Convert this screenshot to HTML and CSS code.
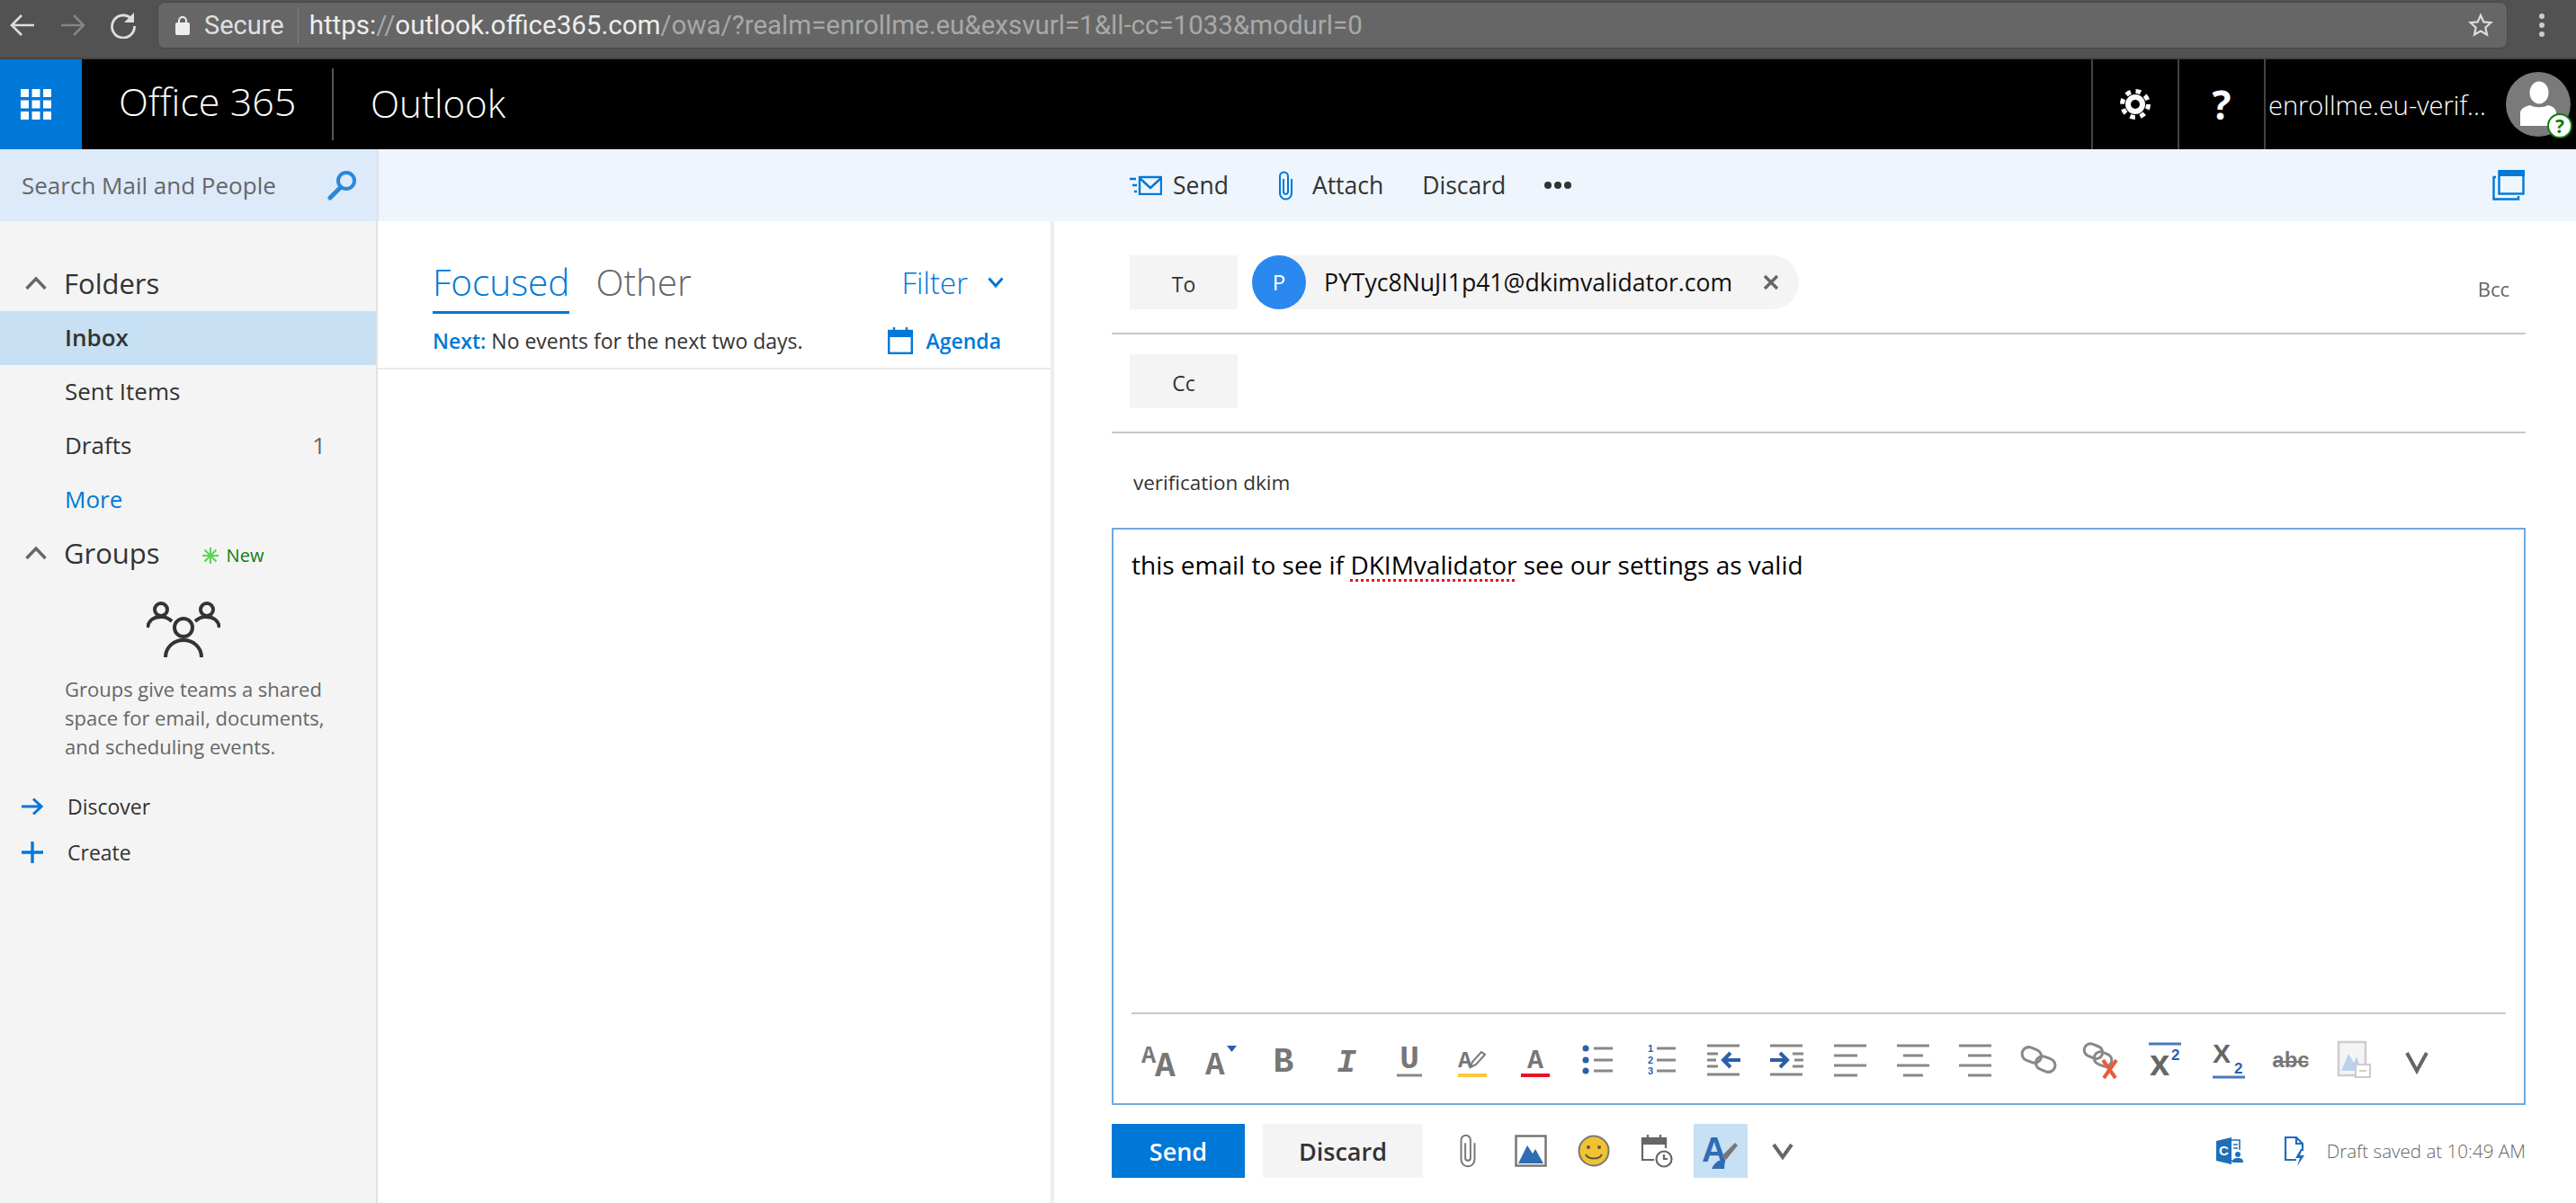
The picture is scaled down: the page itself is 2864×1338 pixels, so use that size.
FILE: index.html
```html
<!DOCTYPE html>
<html lang="en">

<head>
    <meta charset="UTF-8">
    <title>Outlook</title>
    <link rel="stylesheet" href="styles.css">
</head>

<body>
    <!-- browser chrome -->
    <div class="browser-bar">
        <div class="browser-nav">
            <button class="nav-btn">
                <svg width="28" height="26" viewBox="0 0 28 26" fill="none" stroke="#ddd" stroke-width="2.6"><path d="M27 13H3M13 2L2 13l11 11"/></svg>
            </button>
            <button class="nav-btn">
                <svg width="28" height="26" viewBox="0 0 28 26" fill="none" stroke="#858585" stroke-width="2.6"><path d="M1 13h24M15 2l11 11-11 11"/></svg>
            </button>
            <button class="nav-btn">
                <svg width="30" height="30" viewBox="0 0 30 30" fill="none" stroke="#ddd" stroke-width="2.8"><path d="M25 9A12.500 12.500 0 1 0 27.500 16"/><path d="M27 1v11H16" fill="#ddd" stroke="none"/></svg>
            </button>
        </div>
        <div class="omnibox">
            <svg class="lock" width="16" height="22" viewBox="0 0 16 22"><path d="M4 9V6a4 4 0 0 1 8 0v3" fill="none" stroke="#eee" stroke-width="2"/><rect y="8" width="16" height="14" rx="2" fill="#eee"/></svg>
            <span class="secure">Secure</span>
            <span class="url"><b>https:</b>//<b>outlook.office365.com</b>/owa/?realm=enrollme.eu&amp;exsvurl=1&amp;ll-cc=1033&amp;modurl=0</span>
            <svg class="star" width="28" height="28" viewBox="0 0 28 28"><path d="M14 3l3.3 7.4 8 .8-6 5.4 1.7 7.9-7-4-7 4 1.7-7.9-6-5.4 8-.8z" fill="none" stroke="#ddd" stroke-width="2.2"/></svg>
        </div>
        <div class="browser-menu">
            <svg width="8" height="28" viewBox="0 0 8 28" fill="#ccc"><circle cx="4" cy="4" r="3"/><circle cx="4" cy="14" r="3"/><circle cx="4" cy="24" r="3"/></svg>
        </div>
    </div>

    <!-- office 365 header -->
    <header class="suite-bar">
        <div class="app-tile">
            <svg width="34" height="34" viewBox="0 0 34 34" fill="#fff">
                <rect width="9" height="9"/><rect x="12.500" width="9" height="9"/><rect x="25" width="9" height="9"/>
                <rect y="12.500" width="9" height="9"/><rect x="12.500" y="12.500" width="9" height="9"/><rect x="25" y="12.500" width="9" height="9"/>
                <rect y="25" width="9" height="9"/><rect x="12.500" y="25" width="9" height="9"/><rect x="25" y="25" width="9" height="9"/>
            </svg>
        </div>
        <div class="suite-name">Office 365</div>
        <div class="suite-app">Outlook</div>
        <div class="suite-actions">
            <div class="suite-btn">
                <svg width="36" height="36" viewBox="0 0 36 36" fill="none" stroke="#fff"><circle cx="18" cy="18" r="8" stroke-width="6"/><circle cx="18" cy="18" r="14.5" stroke-width="5" stroke-dasharray="5.7 5.7"/></svg>
            </div>
            <div class="suite-btn suite-help">?</div>
            <div class="suite-user">
                <span class="user-name">enrollme.eu-verif...</span>
                <div class="user-photo">
                    <svg width="72" height="72" viewBox="0 0 72 72"><circle cx="36" cy="36" r="36" fill="#7a7a7a"/><ellipse cx="37" cy="23" rx="10.500" ry="12.500" fill="#fff"/><path d="M16 60V46c0-6 7-8 11-9 5 3 15 3 20 0 4 1 9 3 9 9v14z" fill="#fff"/></svg>
                    <span class="user-badge">?</span>
                </div>
            </div>
        </div>
    </header>

    <div class="command-row">
        <div class="search-box">
            <span>Search Mail and People</span>
            <svg width="34" height="34" viewBox="0 0 34 34" fill="none" stroke="#2b88d8"><circle cx="22" cy="12" r="9" stroke-width="4"/><path d="M15 20L4 31" stroke-width="5" stroke-linecap="round"/></svg>
        </div>
        <div class="commands">
            <button class="cmd">
                <svg width="36" height="22" viewBox="0 0 36 22" fill="none" stroke="#0078d7" stroke-width="2.4"><rect x="11" y="2" width="24" height="19"/><path d="M11 3l12 11L35 3"/><path d="M0 4h7M3 11h5M5 18h3"/></svg>
                Send
            </button>
            <button class="cmd cmd-attach">
                <svg width="17" height="33" viewBox="0 0 17 33" fill="none" stroke="#0078d7" stroke-width="2"><path d="M6 9v15a2.600 2.600 0 0 0 5 0V6a4.500 4.500 0 0 0-9 0v19a6.500 6.500 0 0 0 13 0V9"/></svg>
                Attach
            </button>
            <button class="cmd cmd-discard">Discard</button>
            <button class="cmd cmd-more">
                <svg width="32" height="10" viewBox="0 0 32 10" fill="#333"><circle cx="5" cy="5" r="4"/><circle cx="16" cy="5" r="4"/><circle cx="27" cy="5" r="4"/></svg>
            </button>
            <svg class="popout" width="36" height="34" viewBox="0 0 36 34" fill="none" stroke="#0078d7" stroke-width="2.400"><path d="M4 8H1.500v24.500H29V29"/><rect x="7.500" y="1.500" width="27" height="25" fill="#eef5fd"/><rect x="7" y="0" width="29" height="7" fill="#0078d7" stroke="none"/></svg>
        </div>
    </div>

    <div class="panes">
        <nav class="sidebar">
            <div class="folder-head">
                <svg class="collapse" width="24" height="16" viewBox="0 0 24 16" fill="none" stroke="#666" stroke-width="3.400"><path d="M1.500 14L12 3l10.500 11"/></svg>
                <span>Folders</span>
            </div>
            <div class="folder-row active">Inbox</div>
            <div class="folder-row">Sent Items</div>
            <div class="folder-row">Drafts<span class="count">1</span></div>
            <div class="folder-row more">More</div>
            <div class="folder-head groups-head">
                <svg class="collapse" width="24" height="16" viewBox="0 0 24 16" fill="none" stroke="#666" stroke-width="3.400"><path d="M1.500 14L12 3l10.500 11"/></svg>
                <span>Groups</span>
                <svg class="new-mark" width="20" height="20" viewBox="0 0 20 20" stroke="#5ad35a" stroke-width="2"><path d="M10 1v18M1 10h18M3.500 3.500l13 13M16.500 3.500l-13 13"/></svg>
                <span class="new-label">New</span>
            </div>
            <svg class="groups-icon" width="82" height="64" viewBox="0 0 82 64" fill="none" stroke="#333" stroke-width="4">
                <circle cx="16" cy="11" r="7"/>
                <circle cx="67" cy="11" r="7"/>
                <circle cx="41" cy="31" r="10"/>
                <path d="M1 31c1-8 7-12 15-12 5 0 9 2 12 5M81 31c-1-8-7-12-15-12-5 0-9 2-12 5"/>
                <path d="M21 64c0-11 9-19 20-19s20 8 20 19"/>
            </svg>
            <p class="groups-text">Groups give teams a shared space for email, documents, and scheduling events.</p>
            <div class="side-link">
                <svg width="24" height="20" viewBox="0 0 24 20" fill="none" stroke="#0078d7" stroke-width="3"><path d="M0 10h22M13 1.500l9 8.500-9 8.500"/></svg>
                Discover
            </div>
            <div class="side-link">
                <svg width="24" height="24" viewBox="0 0 24 24" fill="none" stroke="#0078d7" stroke-width="3.400"><path d="M12 0v24M0 12h24"/></svg>
                Create
            </div>
        </nav>

        <section class="mail-list">
            <div class="tabs">
                <span class="tab active">Focused</span>
                <span class="tab">Other</span>
                <span class="filter">Filter
                    <svg width="18" height="12" viewBox="0 0 18 12" fill="none" stroke="#0078d7" stroke-width="3"><path d="M1.500 1.500L9 10l7.500-8.500"/></svg>
                </span>
            </div>
            <div class="next-row">
                <span><b>Next:</b> No events for the next two days.</span>
                <span class="agenda">
                    <svg width="28" height="30" viewBox="0 0 28 30" fill="none" stroke="#0078d7" stroke-width="2.400"><rect x="1.200" y="4" width="25.600" height="24.800"/><rect x="1" y="4" width="26" height="7" fill="#0078d7" stroke="none"/><path d="M7 0v6M21 0v6"/></svg>
                    Agenda
                </span>
            </div>
        </section>

        <main class="compose">
            <div class="recipient-row">
                <button class="field-btn">To</button>
                <div class="chip">
                    <span class="chip-avatar">P</span>
                    <span class="chip-mail">PYTyc8NuJI1p41@dkimvalidator.com</span>
                    <svg class="chip-close" width="18" height="18" viewBox="0 0 18 18" fill="none" stroke="#666" stroke-width="3.400"><path d="M2 2l14 14M16 2L2 16"/></svg>
                </div>
                <span class="bcc">Bcc</span>
            </div>
            <div class="recipient-row cc-row">
                <button class="field-btn">Cc</button>
            </div>
            <div class="subject">verification dkim</div>

            <div class="editor">
                <div class="editor-text">this email to see if <span class="misspelled">DKIMvalidator</span> see our settings as valid</div>
                <div class="format-bar">
                    <span class="fmt"><svg class="ico" width="44" height="44" viewBox="0 0 44 44"><text class="glyph" x="2" y="25" font-size="27">A</text><text class="glyph" x="17" y="40" font-size="38">A</text></svg></span>
                    <span class="fmt fmt-tight"><svg class="ico" width="44" height="44" viewBox="0 0 44 44"><text class="glyph" x="4" y="38" font-size="36">A</text><path d="M28 6h11l-5.500 7z" fill="#2b5fa8"/></svg></span>
                    <span class="fmt"><svg class="ico" width="44" height="44" viewBox="0 0 44 44"><text class="glyph" x="22" y="35" text-anchor="middle" font-size="38">B</text></svg></span>
                    <span class="fmt"><svg class="ico" width="44" height="44" viewBox="0 0 44 44"><text class="glyph slant" x="22" y="35" text-anchor="middle" font-size="36">I</text></svg></span>
                    <span class="fmt"><svg class="ico" width="44" height="44" viewBox="0 0 44 44"><text class="glyph" x="22" y="31" text-anchor="middle" font-size="36">U</text><path d="M8 39h28" stroke="#888" stroke-width="3"/></svg></span>
                    <span class="fmt"><svg class="ico" width="44" height="44" viewBox="0 0 44 44"><text class="glyph" x="6" y="30" font-size="26">A</text><path d="M20 30l2-6 10-11 4 3-10 11z" fill="#fff" stroke="#777" stroke-width="2"/><path d="M6 39h32" stroke="#ffc83d" stroke-width="4"/></svg></span>
                    <span class="fmt"><svg class="ico" width="44" height="44" viewBox="0 0 44 44"><text class="glyph" x="22" y="31" text-anchor="middle" font-size="30">A</text><path d="M6 39h32" stroke="#e81123" stroke-width="4"/></svg></span>
                    <span class="fmt"><svg class="ico" width="44" height="44" viewBox="0 0 44 44"><g fill="#2b5fa8"><circle cx="8" cy="9" r="3.500"/><circle cx="8" cy="22" r="3.500"/><circle cx="8" cy="34" r="3.500"/></g><path d="M17 9h21M17 22h21M17 34h21" stroke="#888" stroke-width="3"/></svg></span>
                    <span class="fmt"><svg class="ico" width="44" height="44" viewBox="0 0 44 44"><text class="num" x="7" y="13" font-size="11">1</text><text class="num" x="7" y="26" font-size="11">2</text><text class="num" x="7" y="38" font-size="11">3</text><path d="M17 9h21M17 22h21M17 34h21" stroke="#888" stroke-width="3"/></svg></span>
                    <span class="fmt"><svg class="ico" width="44" height="44" viewBox="0 0 44 44"><path d="M3 6h36M3 38h36M3 15h12M3 22h10M3 29h12" stroke="#888" stroke-width="3" fill="none"/><path d="M40 22H22M29 14l-8 8 8 8" stroke="#2b5fa8" stroke-width="4" fill="none"/></svg></span>
                    <span class="fmt"><svg class="ico" width="44" height="44" viewBox="0 0 44 44"><path d="M3 6h36M3 38h36M28 15h12M30 22h10M28 29h12" stroke="#888" stroke-width="3" fill="none"/><path d="M3 22h18M14 14l8 8-8 8" stroke="#2b5fa8" stroke-width="4" fill="none"/></svg></span>
                    <span class="fmt"><svg class="ico" width="44" height="44" viewBox="0 0 44 44"><path d="M4 6h36M4 17h26M4 28h36M4 39h26" stroke="#888" stroke-width="3"/></svg></span>
                    <span class="fmt"><svg class="ico" width="44" height="44" viewBox="0 0 44 44"><path d="M4 6h36M11 17h22M4 28h36M11 39h22" stroke="#888" stroke-width="3"/></svg></span>
                    <span class="fmt"><svg class="ico" width="44" height="44" viewBox="0 0 44 44"><path d="M3 6h36M13 17h26M3 28h36M13 39h26" stroke="#888" stroke-width="3"/></svg></span>
                    <span class="fmt"><svg class="ico" width="44" height="44" viewBox="0 0 44 44" fill="none" stroke="#888" stroke-width="3"><rect x="3" y="9" width="22" height="15" rx="7.500" transform="rotate(22 14 16)"/><rect x="18" y="19" width="22" height="15" rx="7.500" transform="rotate(22 29 27)"/></svg></span>
                    <span class="fmt"><svg class="ico" width="44" height="44" viewBox="0 0 44 44" fill="none"><g stroke="#888" stroke-width="3"><rect x="2" y="5" width="21" height="14" rx="7" transform="rotate(22 12 12)"/><rect x="13" y="14" width="20" height="14" rx="7" transform="rotate(22 23 21)"/></g><path d="M23 22l14 20M38 22L24 42" stroke="#ea5a3c" stroke-width="4"/></svg></span>
                    <span class="fmt"><svg class="ico" width="44" height="44" viewBox="0 0 44 44"><path d="M4 4h36" stroke="#4a78bd" stroke-width="3"/><text class="sup-x" x="5" y="39" font-size="40">x</text><text class="num" x="29" y="22" font-size="17">2</text></svg></span>
                    <span class="fmt"><svg class="ico" width="44" height="44" viewBox="0 0 44 44"><text class="sup-x" x="5" y="25" font-size="30">X</text><text class="num" x="29" y="37" font-size="17">2</text><path d="M5 41h36" stroke="#4a78bd" stroke-width="3"/></svg></span>
                    <span class="fmt"><svg class="ico" width="44" height="44" viewBox="0 0 44 44"><text class="abc" x="22" y="30" text-anchor="middle" font-size="24">abc</text><path d="M3 24h38" stroke="#777" stroke-width="2"/></svg></span>
                    <span class="fmt"><svg class="ico" width="44" height="44" viewBox="0 0 44 44"><rect x="5" y="2" width="30" height="37" fill="#f4f4f4" stroke="#ccc" stroke-width="2.500"/><path d="M8 34l8-19 6 10 3-7 6 16z" fill="#bcd2ec"/><rect x="24" y="27" width="16" height="14" fill="#fff" stroke="#ccc" stroke-width="2"/><path d="M28 34h8" stroke="#ccc" stroke-width="2"/></svg></span>
                    <span class="fmt"><svg class="ico" width="44" height="44" viewBox="0 0 44 44" fill="none"><path d="M11 14l11 20 11-20" stroke="#666" stroke-width="4"/></svg></span>
                </div>
            </div>

            <footer class="compose-footer">
                <button class="btn-send">Send</button>
                <button class="btn-discard">Discard</button>
                <span class="foot-icon"><svg width="24" height="38" viewBox="0 0 17 33" fill="none" stroke="#777" stroke-width="1.700"><path d="M6 9v15a2.600 2.600 0 0 0 5 0V6a4.500 4.500 0 0 0-9 0v19a6.500 6.500 0 0 0 13 0V9"/></svg></span>
                <span class="foot-icon"><svg width="36" height="36" viewBox="0 0 36 36"><rect x="1.500" y="1.500" width="33" height="33" fill="#fff" stroke="#777" stroke-width="2.500"/><path d="M4 32l10-20 6 9 3-5 9 16z" fill="#2f6cb3"/></svg></span>
                <span class="foot-icon"><svg width="36" height="36" viewBox="0 0 36 36"><circle cx="18" cy="18" r="16.500" fill="#f2c230" stroke="#777" stroke-width="2"/><circle cx="12" cy="14" r="2" fill="#555"/><circle cx="24" cy="14" r="2" fill="#555"/><path d="M9 22c3 6 15 6 18 0" fill="none" stroke="#555" stroke-width="2"/></svg></span>
                <span class="foot-icon"><svg width="36" height="38" viewBox="0 0 36 38" fill="none" stroke="#666" stroke-width="2.200"><path d="M15 29H2V6h26v10"/><rect x="2" y="5" width="26" height="6" fill="#666"/><path d="M8 1v6M22 1v6"/><circle cx="26" cy="28" r="8.500" fill="#fff"/><path d="M26 23v5h4"/></svg></span>
                <span class="foot-tile"><svg class="ico" width="44" height="44" viewBox="0 0 44 44"><text class="tile-a" x="1" y="34" font-size="38">A</text><path d="M23 28l15-15 3 3-13 16z" fill="#777"/><path d="M12 42c3-7 9-11 15-10l-1 10z" fill="#2f6cb3"/></svg></span>
                <span class="foot-chevron"><svg width="26" height="20" viewBox="0 0 26 20" fill="none" stroke="#666" stroke-width="4"><path d="M3 3l10 14L23 3"/></svg></span>
                <div class="foot-right">
                    <svg class="foot-app" width="30" height="30" viewBox="0 0 30 30"><path d="M0 4l17-4v30L0 26z" fill="#1e6fba"/><path d="M17 3h9v11M17 26h3M19 8h5M19 12h5" fill="none" stroke="#1e6fba" stroke-width="1.600"/><text class="door" x="3" y="20" font-size="15">C</text><circle cx="24" cy="19" r="3" fill="#1e6fba"/><path d="M18 28c0-4 2-5 6-5s6 1 6 5z" fill="#1e6fba"/></svg>
                    <svg class="foot-doc" width="24" height="34" viewBox="0 0 24 34" fill="none" stroke="#1e6fba" stroke-width="2.200"><path d="M14 27H2V2h12l7 7v8"/><path d="M14 2v7h7"/><path d="M19 15l-6 10h5l-3 9 8-12h-5l3-7z" fill="#1e6fba" stroke="none"/></svg>
                    <span class="draft-note">Draft saved at 10:49 AM</span>
                </div>
            </footer>
        </main>
    </div>
</body>

</html>
```

FILE: styles.css
```css
:root {
    --blue: #0078d7;
    --text-dark: #333;
    --text-gray: #666;
    --pale: #f4f4f4;
    --ui-font: 'Open Sans', 'Noto Sans', sans-serif;
}

* {
    margin: 0;
    padding: 0;
    box-sizing: border-box;
}

html,
body {
    height: 100%;
    overflow: hidden;
}

body {
    font-family: var(--ui-font);
    background: #fff;
    color: var(--text-dark);
    display: flex;
    flex-direction: column;
}

button {
    font-family: inherit;
    border: none;
    background: none;
    color: inherit;
}

b {
    font-weight: inherit;
}

/* browser chrome */
.browser-bar {
    height: 66px;
    flex: none;
    background: #525252;
    border-bottom: 2px solid #444;
    display: flex;
    align-items: flex-start;
    padding-top: 2px;
}

.browser-nav {
    display: flex;
    gap: 6px;
}

.nav-btn {
    width: 50px;
    height: 52px;
    display: flex;
    align-items: center;
    justify-content: center;
}

.omnibox {
    width: 2621px;
    height: 52px;
    margin-left: 13px;
    background: #666;
    border: 1px solid #484848;
    border-radius: 8px;
    display: flex;
    align-items: center;
    padding-left: 19px;
    padding-right: 15px;
    font-family: 'Roboto', sans-serif;
    font-size: 29px;
    color: #a8a8a8;
}

.secure {
    margin-left: 16px;
    padding-right: 15px;
    border-right: 1px solid #808080;
    color: #e0e0e0;
    line-height: 40px;
}

.url {
    margin-left: 12px;
    font-size: 29.5px;
    white-space: nowrap;
}

.url b {
    color: #eee;
}

.star {
    margin-left: auto;
}

.browser-menu {
    width: 76px;
    height: 52px;
    display: flex;
    align-items: center;
    justify-content: center;
}

/* suite header */
.suite-bar {
    height: 100px;
    flex: none;
    background: #000;
    color: #fff;
    display: flex;
    align-items: center;
}

.app-tile {
    width: 91px;
    height: 100%;
    padding-right: 11px;
    background: var(--blue);
    display: flex;
    align-items: center;
    justify-content: center;
}

.suite-name {
    width: 280px;
    height: 80px;
    padding-left: 41px;
    border-right: 2px solid #555;
    font-size: 43px;
    font-weight: 300;
    line-height: 74px;
    white-space: nowrap;
}

.suite-app {
    margin-left: 41px;
    padding-bottom: 4px;
    font-size: 42px;
    font-weight: 300;
}

.suite-actions {
    margin-left: auto;
    height: 100%;
    display: flex;
}

.suite-btn {
    width: 96px;
    border-left: 2px solid #444;
    display: flex;
    align-items: center;
    justify-content: center;
}

.suite-help {
    font-size: 44px;
    font-weight: 700;
}

.suite-user {
    width: 347px;
    border-left: 2px solid #444;
    display: flex;
    align-items: center;
    padding-left: 3px;
}

.user-name {
    width: 264px;
    font-size: 29px;
    font-weight: 300;
    white-space: nowrap;
}

.user-photo {
    position: relative;
    width: 72px;
    height: 72px;
}

.user-photo svg {
    display: block;
}

.user-badge {
    position: absolute;
    right: -2px;
    bottom: -2px;
    width: 28px;
    height: 28px;
    border: 2px solid #107c10;
    border-radius: 50%;
    background: #fff;
    color: #107c10;
    font-size: 21px;
    font-weight: 700;
    line-height: 24px;
    text-align: center;
}

/* search and commands */
.command-row {
    height: 80px;
    flex: none;
    display: flex;
}

.search-box {
    width: 419px;
    background: #dceafa;
    display: flex;
    align-items: center;
    justify-content: space-between;
    padding: 0 22px 0 24px;
    font-size: 26px;
    color: var(--text-gray);
}

.commands {
    flex: 1;
    background: #eef5fd;
    border-left: 2px solid #e3e3e3;
    display: flex;
    align-items: center;
    padding-left: 835px;
    padding-right: 57px;
}

.cmd {
    display: flex;
    align-items: center;
    gap: 12px;
    font-size: 26.5px;
    white-space: nowrap;
}

.cmd-attach {
    margin-left: 55px;
    gap: 21px;
}

.cmd-discard {
    margin-left: 43px;
}

.cmd-more {
    margin-left: 42px;
}

.popout {
    margin-left: auto;
}

/* three panes */
.panes {
    flex: 1;
    display: flex;
    min-height: 0;
}

.sidebar {
    width: 420px;
    flex: none;
    background: var(--pale);
    border-right: 2px solid #e3e3e3;
    padding-top: 40px;
    font-size: 26px;
}

.folder-head {
    height: 60px;
    display: flex;
    align-items: center;
    padding: 0 0 3px 28px;
    font-size: 31px;
    color: var(--text-dark);
}

.folder-head span {
    margin-left: 19px;
}

.collapse {
    flex: none;
}

.folder-row {
    height: 60px;
    display: flex;
    align-items: center;
    justify-content: space-between;
    padding: 0 56px 3px 72px;
    color: var(--text-dark);
}

.folder-row.active {
    background: #c7e0f4;
    font-weight: 600;
}

.folder-row.more {
    color: var(--blue);
}

.count {
    color: var(--text-gray);
}

.new-mark {
    margin-left: 46px;
    margin-top: 6px;
}

.folder-head .new-label {
    margin: 6px 0 0 8px;
    font-size: 20px;
    color: #107c10;
}

.groups-icon {
    display: block;
    margin: 21px 0 0 163px;
}

.groups-text {
    margin: 19px 40px 0 72px;
    font-size: 22px;
    line-height: 32px;
    color: var(--text-gray);
}

.side-link {
    height: 51px;
    display: flex;
    align-items: center;
    gap: 27px;
    padding-left: 24px;
    font-size: 23px;
}

.groups-text + .side-link {
    margin-top: 25px;
}

/* message list */
.mail-list {
    width: 752px;
    flex: none;
    border-right: 4px solid #eee;
    padding-top: 38px;
}

.tabs {
    height: 65px;
    display: flex;
    padding: 0 52px 0 61px;
}

.tab {
    height: 65px;
    margin-right: 29px;
    font-size: 40.5px;
    font-weight: 300;
    line-height: 60px;
    color: var(--text-gray);
}

.tab.active {
    color: var(--blue);
    border-bottom: 3px solid var(--blue);
}

.filter {
    margin-left: auto;
    height: 60px;
    display: flex;
    align-items: center;
    gap: 22px;
    font-size: 33px;
    font-weight: 300;
    color: var(--blue);
}

.next-row {
    height: 62px;
    display: flex;
    align-items: center;
    justify-content: space-between;
    padding: 0 55px 0 61px;
    border-bottom: 2px solid #eaeaea;
    font-size: 23px;
}

.next-row b {
    color: var(--blue);
    font-weight: 600;
}

.agenda {
    display: flex;
    align-items: center;
    gap: 15px;
    color: var(--blue);
    font-weight: 600;
}

/* compose form */
.compose {
    flex: 1;
    min-width: 0;
    padding: 38px 56px 0 64px;
}

.recipient-row {
    display: flex;
    padding: 0 0 26px 20px;
    border-bottom: 2px solid #c8c8c8;
}

.cc-row {
    padding-top: 22px;
}

.field-btn {
    width: 120px;
    height: 60px;
    padding-top: 3px;
    background: var(--pale);
    font-size: 23px;
}

.chip {
    height: 60px;
    margin-left: 16px;
    padding-right: 22px;
    border-radius: 30px;
    background: var(--pale);
    display: flex;
    align-items: center;
}

.chip-avatar {
    width: 60px;
    height: 60px;
    border-radius: 50%;
    background: #2b88ee;
    color: #fff;
    font-size: 24px;
    line-height: 60px;
    text-align: center;
}

.chip-mail {
    margin-left: 20px;
    font-size: 26.6px;
    color: #111;
}

.chip-close {
    margin-left: 34px;
}

.bcc {
    margin-left: auto;
    padding: 22px 18px 0 0;
    font-size: 22px;
    color: var(--text-gray);
}

.subject {
    height: 105px;
    padding: 4px 0 0 24px;
    display: flex;
    align-items: center;
    font-size: 22.5px;
    color: var(--text-dark);
}

.editor {
    height: 642px;
    border: 2px solid #6fa9e0;
    display: flex;
    flex-direction: column;
}

.editor-text {
    padding: 20px 20px 0;
    font-size: 28px;
    line-height: 38px;
    color: #000;
}

.misspelled {
    text-decoration: underline dotted #e81123 3px;
    text-underline-offset: 5px;
}

.format-bar {
    margin: auto 20px 0;
    height: 101px;
    padding-top: 16px;
    border-top: 2px solid #c8c8c8;
    display: flex;
}

.fmt {
    width: 70px;
    flex: none;
    height: 70px;
    display: flex;
    align-items: center;
    justify-content: center;
}

.format-bar .fmt:first-child {
    margin-left: -4px;
}

.fmt-tight {
    width: 68px;
}

.ico {
    display: block;
    overflow: visible;
}

.glyph {
    font-family: 'Liberation Mono', monospace;
    font-weight: 700;
    fill: #777;
}

.slant {
    font-style: italic;
}

.num {
    font-family: 'Liberation Sans', sans-serif;
    font-weight: 700;
    fill: #2b5fa8;
}

.sup-x {
    font-family: 'Liberation Sans', sans-serif;
    font-weight: 700;
    fill: #666;
}

.abc {
    font-family: 'Liberation Sans', sans-serif;
    font-weight: 700;
    fill: #777;
}

.tile-a {
    font-family: 'Liberation Sans', sans-serif;
    font-weight: 700;
    fill: #2f6cb3;
}

.door {
    font-family: 'Liberation Sans', sans-serif;
    font-weight: 700;
    fill: #fff;
}

.compose-footer {
    height: 60px;
    margin-top: 21px;
    display: flex;
    align-items: center;
}

.btn-send {
    width: 148px;
    height: 60px;
    background: var(--blue);
    color: #fff;
    font-size: 27px;
    font-weight: 600;
}

.btn-discard {
    width: 178px;
    height: 60px;
    margin-left: 20px;
    background: var(--pale);
    font-size: 27px;
    font-weight: 600;
}

.foot-icon {
    width: 70px;
    height: 60px;
    display: flex;
    align-items: center;
    justify-content: center;
}

.btn-discard + .foot-icon {
    margin-left: 15px;
}

.foot-tile {
    width: 60px;
    height: 60px;
    margin-left: 6px;
    background: #c7e0f4;
    display: flex;
    align-items: center;
    justify-content: center;
}

.foot-chevron {
    width: 78px;
    display: flex;
    justify-content: center;
}

.foot-right {
    margin-left: auto;
    display: flex;
    align-items: center;
}

.foot-doc {
    margin-left: 45px;
}

.draft-note {
    margin-left: 24px;
    font-size: 20.6px;
    font-weight: 300;
    color: var(--text-gray);
    white-space: nowrap;
}
```
